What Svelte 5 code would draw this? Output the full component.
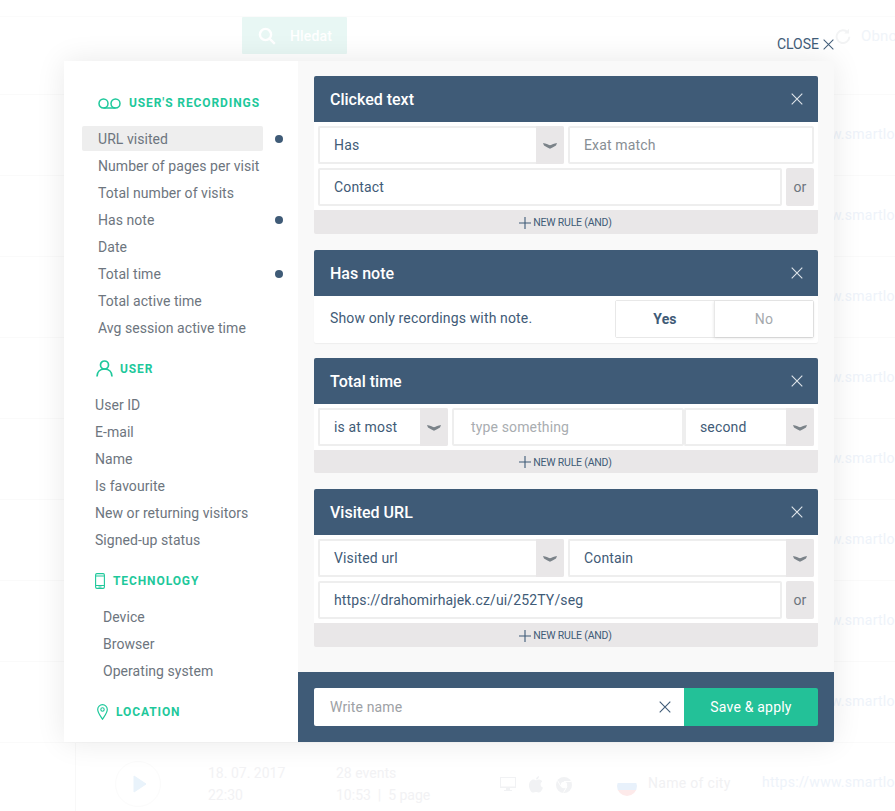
<script>
  const rowTops = [0, 1, 2, 3, 4, 5, 6, 7];
  const recordings = [
    { label: 'URL visited', active: true, dot: true },
    { label: 'Number of pages per visit' },
    { label: 'Total number of visits' },
    { label: 'Has note', dot: true },
    { label: 'Date' },
    { label: 'Total time', dot: true },
    { label: 'Total active time' },
    { label: 'Avg session active time' }
  ];
  const user = ['User ID', 'E-mail', 'Name', 'Is favourite', 'New or returning visitors', 'Signed-up status'];
  const tech = ['Device', 'Browser', 'Operating system'];
</script>

{#snippet cross(cls)}
  <svg class={cls} viewBox="0 0 12 12" aria-hidden="true"><path d="M.7.7l10.6 10.6M11.3.7L.7 11.3" fill="none" stroke="currentColor" stroke-width="1.1"/></svg>
{/snippet}

{#snippet select(text, cls)}
  <div class="select {cls}">
    <span class="value">{text}</span>
    <span class="arrow"><svg viewBox="0 0 14 7" aria-hidden="true"><path d="M0 1C3 1.600 5 2.600 7 3.200 9 2.600 11 1.600 14 1L13 3.600C11 4.800 9 5.800 7 6.800 5 5.800 3 4.800 1 3.600z" fill="currentColor"/></svg></span>
  </div>
{/snippet}

{#snippet header(title)}
  <div class="card-head">
    <h3>{title}</h3>
    {@render cross('head-x')}
  </div>
{/snippet}

{#snippet newRule(cls)}
  <div class="new-rule {cls}">
    <svg viewBox="0 0 12 12" aria-hidden="true"><path d="M6 0v12M0 6h12" fill="none" stroke="currentColor" stroke-width="1.1"/></svg>
    <span>NEW RULE (AND)</span>
  </div>
{/snippet}

<div class="page">
  <div class="backdrop">
    <div class="strip"></div>
    <div class="toolbar">
      <div class="search">
        <svg viewBox="0 0 18 18" aria-hidden="true"><circle cx="7.5" cy="7.5" r="5.6" fill="none" stroke="currentColor" stroke-width="2.4"/><path d="M11.8 11.8l5 5" stroke="currentColor" stroke-width="2.4" fill="none"/></svg>
        <span>Hledat</span>
      </div>
      <div class="refresh">
        <svg viewBox="0 0 20 20" aria-hidden="true"><path d="M16 5.5A8 8 0 1 0 18 11" fill="none" stroke="currentColor" stroke-width="2.4"/><path d="M17.5 1v6h-6z" fill="currentColor"/></svg>
        <span>Obnovit</span>
      </div>
    </div>
    <div class="row first"></div>
    {#each rowTops as r (r)}
      <div class="row"><span class="url">https://www.smartlook.com</span></div>
    {/each}
    <div class="row last">
      <div class="play"><svg viewBox="0 0 14 18" aria-hidden="true"><path d="M1 1l12 8-12 8z" fill="currentColor" stroke="currentColor" stroke-linejoin="round"/></svg></div>
      <div class="col date"><span>18. 07. 2017</span><span>22:30</span></div>
      <div class="col events"><span>28 events</span><span>10:53 &nbsp;|&nbsp; 5 page</span></div>
      <div class="tech">
        <svg class="i-monitor" viewBox="0 0 16 15" aria-hidden="true"><path d="M0 0h16v11H0zM6 11h4v2h2v1H4v-1h2z" fill="currentColor"/><path d="M1 1h14v8.500H1z" fill="#fff"/></svg>
        <svg class="i-apple" viewBox="0 0 14 17" aria-hidden="true"><path d="M7 4.500c1-.6 2-1 3.200-.9 1.200.1 2.300.7 3 1.800-2.500 1.600-2 5 .8 6.200-.7 2-2.200 5-4 5-1 0-1.800-.6-3-.6s-2 .6-3 .6C2 16.600 0 12.500 0 9.500 0 6 2.200 3.600 4.500 3.600c1 0 1.800.5 2.500.9zM7 3.600C7 1.800 8.400.2 10 0c.2 1.800-1.200 3.500-3 3.600z" fill="currentColor"/></svg>
        <svg class="i-chrome" viewBox="0 0 16 16" aria-hidden="true"><circle cx="8" cy="8" r="8" fill="currentColor"/><circle cx="8" cy="8" r="3.200" fill="#fff"/><path d="M8 4.500h7M5 9.500L1.500 3.500M11 9.500L7.500 15.500" stroke="#fff" stroke-width="1"/></svg>
      </div>
      <svg class="flag" viewBox="0 0 20 20" aria-hidden="true"><defs><clipPath id="flag-clip"><circle cx="10" cy="10" r="10"/></clipPath></defs><g clip-path="url(#flag-clip)"><path d="M0 0h20v7H0z" fill="#fff"/><path d="M0 7h20v7H0z" fill="#e8f1fb"/><path d="M0 14h20v6H0z" fill="#fdeaea"/></g></svg>
      <span class="city">Name of city</span>
      <span class="url">https://www.smartlook.com</span>
    </div>
  </div>

  <div class="modal">
    <div class="close">CLOSE {@render cross('close-x')}</div>

    <aside class="sidebar">
      <div class="heading h-rec">
        <svg class="ic-rec" viewBox="0 0 23 11" aria-hidden="true"><circle cx="5.500" cy="5.500" r="4.500" fill="none" stroke="currentColor" stroke-width="1.500"/><circle cx="17.500" cy="5.500" r="4.500" fill="none" stroke="currentColor" stroke-width="1.500"/><path d="M5.500 10h12" stroke="currentColor" stroke-width="1.500"/></svg>
        <span>USER'S RECORDINGS</span>
      </div>
      <ul class="list l-rec">
        {#each recordings as item (item.label)}
          <li class:active={item.active}>
            <span class="label">{item.label}</span>
            {#if item.dot}<span class="dot"></span>{/if}
          </li>
        {/each}
      </ul>

      <div class="heading h-user">
        <svg class="ic-user" viewBox="0 0 17 17" aria-hidden="true"><circle cx="8.500" cy="5" r="4" fill="none" stroke="currentColor" stroke-width="1.700"/><path d="M1 16.500c0-4.500 3-7.500 7.500-7.500s7.500 3 7.500 7.500" fill="none" stroke="currentColor" stroke-width="1.700"/></svg>
        <span>USER</span>
      </div>
      <ul class="list l-user">
        {#each user as label (label)}<li><span class="label">{label}</span></li>{/each}
      </ul>

      <div class="heading h-tech">
        <svg class="ic-tech" viewBox="0 0 10 16" aria-hidden="true"><rect x=".6" y=".6" width="8.800" height="14.800" rx="1.300" fill="none" stroke="currentColor" stroke-width="1.100"/><path d="M1 3h8M1 12.500h8" stroke="currentColor" stroke-width="1"/><path d="M3.500 14h3" stroke="currentColor" stroke-width="1"/></svg>
        <span>TECHNOLOGY</span>
      </div>
      <ul class="list l-tech">
        {#each tech as label (label)}<li><span class="label">{label}</span></li>{/each}
      </ul>

      <div class="heading h-loc">
        <svg class="ic-loc" viewBox="0 0 11 16" aria-hidden="true"><path d="M5.500 15.200C3.500 12 .7 8.800.7 5.500a4.800 4.800 0 0 1 9.600 0c0 3.300-2.800 6.500-4.800 9.700z" fill="none" stroke="currentColor" stroke-width="1.200"/><circle cx="5.500" cy="5.500" r="1.700" fill="none" stroke="currentColor" stroke-width="1.100"/></svg>
        <span>LOCATION</span>
      </div>
    </aside>

    <section class="main">
      <div class="cards">
        <article class="card">
          {@render header('Clicked text')}
          <div class="body">
            <div class="line">
              {@render select('Has', '')}
              <div class="field muted">Exat match</div>
            </div>
            <div class="line with-or">
              <div class="field">Contact</div>
              <div class="or">or</div>
            </div>
          </div>
          {@render newRule('')}
        </article>

        <article class="card c-note">
          {@render header('Has note')}
          <div class="body note">
            <p>Show only recordings with note.</p>
            <div class="toggle">
              <button class="yes">Yes</button>
              <button class="no">No</button>
            </div>
          </div>
        </article>

        <article class="card">
          {@render header('Total time')}
          <div class="body">
            <div class="line triple">
              {@render select('is at most', '')}
              <div class="field faint">type something</div>
              {@render select('second', '')}
            </div>
          </div>
          {@render newRule('short')}
        </article>

        <article class="card">
          {@render header('Visited URL')}
          <div class="body">
            <div class="line">
              {@render select('Visited url', '')}
              {@render select('Contain', '')}
            </div>
            <div class="line with-or">
              <div class="field">https://drahomirhajek.cz/ui/252TY/seg</div>
              <div class="or">or</div>
            </div>
          </div>
          {@render newRule('')}
        </article>
      </div>

      <footer class="foot">
        <div class="name">
          <span>Write name</span>
          {@render cross('name-x')}
        </div>
        <button class="save">Save &amp; apply</button>
      </footer>
    </section>
  </div>
</div>

<style>
  :global(body) { margin: 0; background: #fff; }
  .page {
    position: relative;
    width: 895px;
    height: 811px;
    overflow: hidden;
    font-family: Roboto, "Liberation Sans", sans-serif;
    font-size: 14px;
    letter-spacing: .14px;
    color: #3f5b77;
  }
  button { font-family: inherit; letter-spacing: inherit; cursor: pointer; }

  /* faded page behind the dialog */
  .strip { height: 16px; border-bottom: 1px solid #fbfbfb; }
  .toolbar { height: 37px; display: flex; align-items: center; padding-left: 242px; }
  .search {
    flex: none;
    width: 105px; height: 37px; box-sizing: border-box;
    display: flex; align-items: center; gap: 14px; padding-left: 16px;
    background: #e8f7f4; color: #fff; border-radius: 1px; font-size: 14px; font-weight: 500;
  }
  .search svg { width: 18px; height: 18px; }
  .refresh { flex: none; margin-left: 488px; display: flex; align-items: center; gap: 10px; color: #f0f4f9; font-size: 15px; white-space: nowrap; }
  .refresh svg { width: 16px; height: 16px; color: #f2f3f4; }
  .row {
    height: 81px; box-sizing: border-box; position: relative;
    border-bottom: 1px solid #fafafa;
    display: flex; align-items: center;
  }
  .row.first { height: 41px; }
  .row .url { position: absolute; left: 762px; top: 31px; white-space: nowrap; color: #eef3fa; font-size: 14px; letter-spacing: .25px; }
  .row.last { border-bottom: 0; }
  .row.last::before { content: ""; position: absolute; left: 75px; top: 0; bottom: 0; width: 1px; background: #f8f8f8; }
  .play {
    position: absolute; left: 115px; top: 18px; width: 46px; height: 46px; box-sizing: border-box;
    border: 1px solid #fbfbfb; border-radius: 50%; color: #e9f3fb;
    display: flex; align-items: center; justify-content: center; padding-left: 4px;
  }
  .play svg { width: 14px; height: 18px; }
  .col { position: absolute; top: 21px; display: flex; flex-direction: column; gap: 4px; color: #f2f2f4; font-size: 14px; line-height: 18px; white-space: nowrap; letter-spacing: 0; }
  .date { left: 208px; }
  .events { left: 336px; }
  .tech { position: absolute; left: 500px; top: 33px; display: flex; align-items: center; gap: 13px; color: #f1f2f4; }
  .i-monitor { width: 16px; height: 15px; }
  .i-apple { width: 14px; height: 17px; }
  .i-chrome { width: 16px; height: 16px; }
  .flag { position: absolute; left: 617px; top: 33px; width: 20px; height: 20px; }
  .city { position: absolute; left: 648px; top: 32px; color: #f1f1f3; font-size: 14px; font-weight: 400; letter-spacing: .3px; white-space: nowrap; }

  /* dialog */
  .modal {
    position: absolute; left: 64px; top: 61px; width: 770px; height: 681px;
    display: flex; background: #f9f9f9; border-radius: 2px;
    box-shadow: 0 0 30px rgba(0, 0, 0, .09);
  }
  .close {
    position: absolute; right: 0; top: -25px; height: 16px;
    display: flex; align-items: center; gap: 4px;
    font-size: 14px; letter-spacing: 0; color: #3f5b77; white-space: nowrap;
  }
  .close-x, .head-x, .name-x { display: block; }
  .close-x { width: 11px; height: 11px; }

  .sidebar { width: 234px; flex: none; background: #fff; padding-top: 29px; box-sizing: border-box; overflow: hidden; }
  .heading {
    height: 26px; display: flex; align-items: center; margin-bottom: 10px;
    color: #1ec89b; font-size: 12px; font-weight: 700; letter-spacing: .9px; white-space: nowrap;
  }
  .h-rec { padding-left: 34px; gap: 8px; }
  .ic-rec { width: 23px; height: 11px; }
  .h-user, .h-tech, .h-loc { margin-top: 16px; }
  .h-user { padding-left: 32px; gap: 7px; }
  .ic-user { width: 17px; height: 17px; margin-top: -2px; }
  .h-tech { padding-left: 31px; gap: 8px; }
  .ic-tech { width: 10px; height: 16px; }
  .h-loc { padding-left: 33px; gap: 8px; }
  .ic-loc { width: 11px; height: 16px; }
  .list { list-style: none; margin: 0; padding: 0; color: #6d757e; font-size: 14px; letter-spacing: .05px; }
  .list li { height: 25px; margin-bottom: 2px; display: flex; align-items: center; position: relative; white-space: nowrap; }
  .label { padding-top: 1px; }
  .l-rec li { margin-left: 18px; width: 181px; padding-left: 16px; box-sizing: border-box; border-radius: 2px; }
  .l-rec li.active { background: #eeeeee; }
  .l-user li { padding-left: 31px; }
  .l-tech li { padding-left: 39px; }
  .dot { position: absolute; left: 193px; top: 9px; width: 8px; height: 8px; border-radius: 50%; background: #3f5b77; }

  .main { flex: 1; min-width: 0; display: flex; flex-direction: column; }
  .cards { padding: 15px 16px 0; flex: 1; }
  .card { margin-bottom: 16px; }
  .c-note { margin-bottom: 15px; }
  .card-head {
    height: 46px; background: #3f5b77; color: #fff; border-radius: 2px 2px 0 0;
    display: flex; align-items: center; justify-content: space-between; padding: 0 15px 0 16px;
  }
  h3 { margin: 0; font-size: 16px; font-weight: 500; letter-spacing: 0; }
  .head-x { width: 12px; height: 12px; color: #dfe5ea; }
  .body { background: #fff; padding: 4px; display: flex; flex-direction: column; gap: 4px; }
  .line { display: grid; grid-template-columns: 1fr 1fr; gap: 4px; height: 38px; }
  .line.with-or { grid-template-columns: 1fr 28px; }
  .line.triple { grid-template-columns: 130px 4px 232px 130px; gap: 0; }
  .line.triple .field { grid-column: 3; }
  .field, .select {
    box-sizing: border-box; height: 38px; border: 2px solid #eeeeee; border-radius: 2px; background: #fff;
    display: flex; align-items: center; white-space: nowrap; min-width: 0;
  }
  .field { padding-left: 14px; }
  .select { padding-left: 14px; border-right: 0; }
  .value { flex: 1; }
  .arrow {
    width: 28px; align-self: stretch; margin: -2px 0; flex: none;
    background: #e9e7e8; color: #7b8389; border-radius: 0 2px 2px 0;
    display: flex; align-items: center; justify-content: center;
  }
  .arrow svg { width: 14px; height: 7px; }
  .line.triple .field.faint { padding-left: 17px; }
  .muted { color: #878e94; }
  .faint { color: #a9adb1; }
  .or {
    background: #e9e7e8; border-radius: 2px; color: #6d757e;
    display: flex; align-items: center; justify-content: center;
  }
  .new-rule {
    height: 24px; background: #e9e7e8; border-radius: 0 0 2px 2px;
    display: flex; align-items: center; justify-content: center; gap: 2px; padding: 1px 1px 0 0; box-sizing: border-box;
    font-size: 10.5px; color: #3f5b77; letter-spacing: -.2px;
  }
  :global(.new-rule.short) { height: 23px; }
  .new-rule svg { width: 12px; height: 12px; }

  .note { flex-direction: row; align-items: center; justify-content: space-between; padding: 4px 4px 5px 16px; height: 47px; box-sizing: border-box; border-radius: 0 0 2px 2px; box-shadow: 0 1px 1px #eeeeee; }
  .note p { margin: 0 0 2px; }
  .toggle { width: 199px; height: 38px; display: flex; border: 1px solid #e8e8e8; box-sizing: border-box; border-radius: 2px; }
  .toggle button { flex: 1; border: 0; background: #fff; font-size: 14px; padding: 0; }
  .yes { font-weight: 700; color: #3f5b77; }
  .no { color: #a5a9ad; border-left: 1px solid #e8e8e8 !important; box-shadow: 0 1px 3px rgba(0, 0, 0, .12); }

  .foot { height: 70px; flex: none; background: #3f5b77; display: flex; align-items: center; padding: 0 16px; border-radius: 0 0 2px 0; }
  .name {
    width: 370px; height: 38px; background: #fff; box-sizing: border-box; border-radius: 2px 0 0 2px;
    display: flex; align-items: center; justify-content: space-between; padding: 0 13px 0 16px; color: #9da1a5;
  }
  .name-x { width: 12px; height: 12px; color: #3f5b77; }
  .save {
    flex: 1; height: 38px; border: 0; background: #23c198; color: #fff; font-size: 14px; letter-spacing: .2px; border-radius: 0 2px 2px 0; padding: 0;
  }
</style>
